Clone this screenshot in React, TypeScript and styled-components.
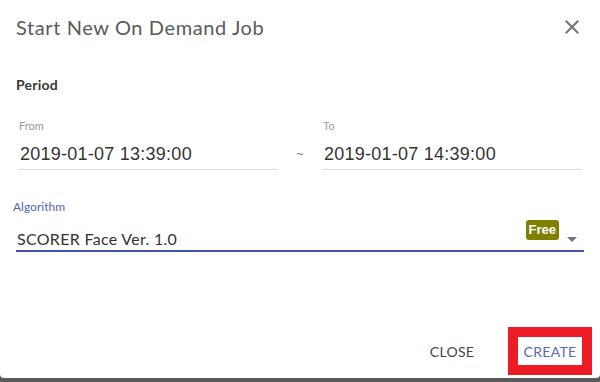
import React from 'react';
import styled, { createGlobalStyle } from 'styled-components';

const GlobalStyle = createGlobalStyle`
  html, body {
    margin: 0;
    padding: 0;
    background: #5b5b5b;
  }
  * {
    box-sizing: border-box;
  }
`;

const UI_FONT = `'Lato', 'Open Sans', sans-serif`;
const INPUT_FONT = `'Liberation Sans', Arial, sans-serif`;

export default function App(): JSX.Element {
  return (
    <>
      <GlobalStyle />
      <Dialog>
        <Header>
          <Title>Start New On Demand Job</Title>
          <IconButton aria-label="close">
            <svg width="24" height="24" viewBox="0 0 24 24">
              <path
                fill="#757575"
                d="M19 6.41 17.59 5 12 10.59 6.41 5 5 6.41 10.59 12 5 17.59 6.41 19 12 13.41 17.59 19 19 17.59 13.41 12z"
              />
            </svg>
          </IconButton>
        </Header>
        <Body>
          <SectionTitle>Period</SectionTitle>
          <PeriodRow>
            <DateField>
              <FieldLabel>From</FieldLabel>
              <DateValue>2019-01-07 13:39:00</DateValue>
            </DateField>
            <Tilde>~</Tilde>
            <DateField>
              <FieldLabel $input>To</FieldLabel>
              <DateValue>2019-01-07 14:39:00</DateValue>
            </DateField>
          </PeriodRow>
          <SelectField>
            <FieldLabel $active>Algorithm</FieldLabel>
            <SelectRow>
              <SelectValue>SCORER Face Ver. 1.0</SelectValue>
              <Badge>Free</Badge>
              <ArrowIcon width="24" height="24" viewBox="0 0 24 24">
                <path fill="#757575" d="M7 10l5 5 5-5z" />
              </ArrowIcon>
            </SelectRow>
          </SelectField>
        </Body>
        <Footer>
          <TextButton>CLOSE</TextButton>
          <Highlight>
            <TextButton $primary>CREATE</TextButton>
          </Highlight>
        </Footer>
      </Dialog>
    </>
  );
}

const Dialog = styled.div`
  width: 600px;
  height: 378px;
  background: #ffffff;
  border-radius: 0 0 4px 4px;
  display: flex;
  flex-direction: column;
  font-family: ${UI_FONT};
`;

const Header = styled.div`
  display: flex;
  align-items: center;
  justify-content: space-between;
  padding: 15px 16px 0 16px;
`;

const Title = styled.h2`
  margin: 0;
  font-size: 20px;
  line-height: 24px;
  font-weight: 400;
  letter-spacing: 0.6px;
  color: #5a5a5a;
`;

const IconButton = styled.button`
  border: none;
  background: none;
  padding: 0;
  width: 24px;
  height: 24px;
  display: flex;
  cursor: pointer;
`;

const Body = styled.div`
  flex: 1;
  padding: 0 16px;
  display: flex;
  flex-direction: column;
`;

const SectionTitle = styled.div`
  margin-top: 36px;
  font-size: 14px;
  line-height: 20px;
  font-weight: 700;
  letter-spacing: 0.2px;
  color: #383838;
`;

const PeriodRow = styled.div`
  margin-top: 24px;
  display: grid;
  grid-template-columns: 260px 1fr 260px;
  align-items: center;
  padding: 0 2px;
`;

const DateField = styled.div`
  display: flex;
  flex-direction: column;
  border-bottom: 1px solid #dddddd;
  padding-bottom: 3px;
`;

const FieldLabel = styled.label<{ $active?: boolean; $input?: boolean }>`
  font-family: ${({ $input }) => ($input ? INPUT_FONT : UI_FONT)};
  font-size: ${({ $active }) => ($active ? '12px' : '11px')};
  line-height: 14px;
  color: ${({ $active }) => ($active ? '#5364c4' : '#9a9a9a')};
  margin-left: ${({ $active }) => ($active ? '-3px' : '1px')};
`;

const DateValue = styled.div`
  margin-top: 9px;
  padding-left: 2px;
  font-family: ${INPUT_FONT};
  font-size: 18px;
  letter-spacing: 0.25px;
  line-height: 24px;
  color: #333333;
`;

const Tilde = styled.span`
  text-align: center;
  font-family: ${INPUT_FONT};
  font-size: 12px;
  color: #777777;
  padding-top: 18px;
`;

const SelectField = styled.div`
  margin-top: 30px;
  display: flex;
  flex-direction: column;
`;

const SelectRow = styled.div`
  margin-top: 10px;
  height: 28px;
  display: flex;
  align-items: center;
  border-bottom: 2px solid #3f51b5;
`;

const SelectValue = styled.div`
  flex: 1;
  align-self: flex-end;
  padding-left: 1px;
  font-size: 16px;
  line-height: 22px;
  letter-spacing: 0.3px;
  color: #333333;
`;

const Badge = styled.span`
  align-self: flex-start;
  margin-top: -4px;
  height: 20px;
  padding: 0 3px;
  border-radius: 3px;
  background: #808000;
  color: #ffffff;
  font-family: ${INPUT_FONT};
  font-weight: 700;
  font-size: 13px;
  line-height: 20px;
`;

const ArrowIcon = styled.svg`
  margin-left: 1px;
  margin-top: 3px;
`;

const Footer = styled.div`
  display: flex;
  justify-content: flex-end;
  align-items: center;
  gap: 24px;
  padding: 0 8px 3px 0;
`;

const Highlight = styled.div`
  border: 10px solid #ed1c24;
`;

const TextButton = styled.button<{ $primary?: boolean }>`
  border: none;
  background: #ffffff;
  min-width: 64px;
  height: 28px;
  padding: 0 4px;
  font-family: ${UI_FONT};
  font-size: 14px;
  font-weight: 400;
  letter-spacing: 0.3px;
  color: ${({ $primary }) => ($primary ? '#5767c4' : '#444444')};
  cursor: pointer;
`;
